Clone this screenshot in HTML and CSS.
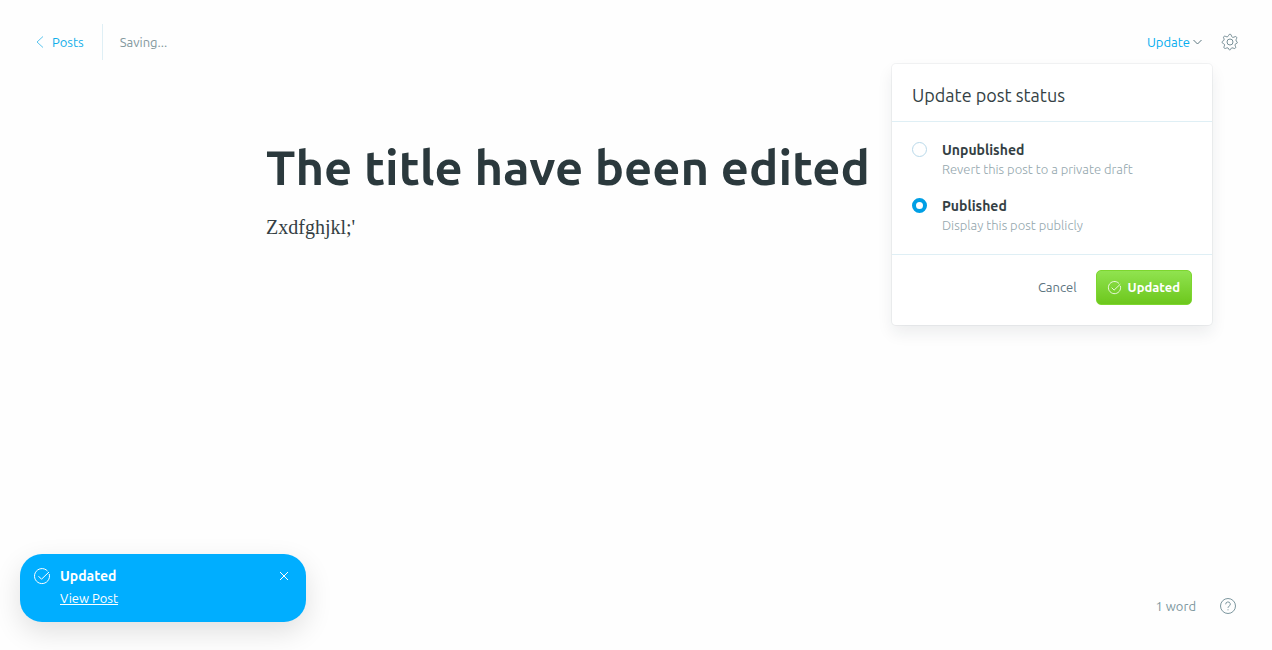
FILE: index.html
```html
<!DOCTYPE html>
<html lang="en">
<head>
<meta charset="utf-8">
<meta name="viewport" content="width=device-width, initial-scale=1">
<title>Post editor</title>
<link rel="stylesheet" href="styles.css">
</head>
<body>
<div class="editor">
  <header class="toolbar">
    <a class="back" href="#">
      <svg class="icon-back" viewBox="0 0 8 12" aria-hidden="true"><path d="M7 .5 1 6l6 5.500"/></svg>
      Posts
    </a>
    <span class="save-state">Saving...</span>
    <div class="actions">
      <div class="publish">
        <button class="update" type="button" aria-expanded="true">Update
          <svg class="icon-chevron" viewBox="0 0 9 8" aria-hidden="true"><path d="m.5 2 4 4 4-4"/></svg>
        </button>
        <form class="menu">
          <h2 class="menu-title">Update post status</h2>
          <div class="options">
            <label class="option">
              <input class="radio" type="radio" name="status">
              <span><strong class="option-name">Unpublished</strong><small class="option-note">Revert this post to a private draft</small></span>
            </label>
            <label class="option">
              <input class="radio" type="radio" name="status" checked>
              <span><strong class="option-name">Published</strong><small class="option-note">Display this post publicly</small></span>
            </label>
          </div>
          <div class="menu-footer">
            <button class="cancel" type="button">Cancel</button>
            <button class="confirm" type="button">
              <svg class="icon-small" viewBox="0 0 16 16" aria-hidden="true"><path d="M15.200 6A7.500 7.500 0 1 1 13.500 3M4.500 8.200l3 3L15 4"/></svg>
              Updated
            </button>
          </div>
        </form>
      </div>
      <button class="settings" type="button" aria-label="Settings">
        <svg class="icon-gear" viewBox="0 0 24 24" aria-hidden="true"><circle cx="12" cy="12" r="4.500"/><path d="M10.200 1.600a1.900 1.900 0 0 1 3.600 0l.6 1.800a2.500 2.500 0 0 0 3.400 1.400l1.700-.8a1.900 1.900 0 0 1 2.500 2.500l-.8 1.700a2.500 2.500 0 0 0 1.400 3.400a1.900 1.900 0 0 1 0 2.200l-1.400.6a2.500 2.500 0 0 0-1.400 3.400l.6 1.300a1.900 1.900 0 0 1-2.500 2.500l-1.300-.6a2.500 2.500 0 0 0-3.400 1.400l-.4.9a1.200 1.200 0 0 1-2.200 0l-.4-.9a2.500 2.500 0 0 0-3.400-1.400l-1.300.6a1.900 1.900 0 0 1-2.500-2.500l.6-1.300a2.500 2.500 0 0 0-1.400-3.400l-1-.4a1.900 1.900 0 0 1 0-3.400l1-.4A2.500 2.500 0 0 0 3 7.200l-.6-1.300a1.900 1.900 0 0 1 2.500-2.500l1.300.6a2.500 2.500 0 0 0 3.400-1.400z"/></svg>
      </button>
    </div>
  </header>
  <main class="post">
    <h1 class="post-title">The title have been edited</h1>
    <p class="post-body">Zxdfghjkl;'</p>
  </main>
  <footer class="status-bar">
    <aside class="toast" role="status">
      <svg class="icon-check" viewBox="0 0 16 16" aria-hidden="true"><path d="M15.200 6A7.500 7.500 0 1 1 13.500 3M4.500 8.200l3 3L15 4"/></svg>
      <div class="toast-text">
        <strong class="toast-title">Updated</strong>
        <a class="toast-link" href="#">View Post</a>
      </div>
      <button class="toast-close" type="button" aria-label="Close"><svg class="icon-close" viewBox="0 0 8 8" aria-hidden="true"><path d="m0 0 8 8M8 0 0 8"/></svg></button>
    </aside>
    <div class="info">
      <span>1 word</span>
      <a class="help" href="#" aria-label="Help"><svg class="icon-help" viewBox="0 0 16 16" aria-hidden="true"><circle cx="8" cy="8" r="7.500"/><path d="M5.700 6.300a2.300 2.300 0 1 1 3.300 2c-.7.3-1 .7-1 1.500M8 11.300v1"/></svg></a>
    </div>
  </footer>
</div>
</body>
</html>
```
FILE: styles.css
```css
*, *::before, *::after { box-sizing: border-box; }
body {
  margin: 0;
  background: #fefefe;
  color: #343f44;
  font: 13px/20px Ubuntu, "Noto Sans", "Open Sans", sans-serif;
}
button { padding: 0; border: 0; background: none; color: inherit; font: inherit; cursor: pointer; }
a { color: inherit; }
svg { display: block; flex: none; fill: none; stroke: currentColor; overflow: visible; }

.editor { display: flex; flex-direction: column; min-height: 100vh; }

.toolbar { display: flex; align-items: center; padding: 24px 34px 0 36px; }
.back {
  display: flex; align-items: center; gap: 8px;
  height: 36px; padding-right: 18px; margin-right: 17px;
  border-right: 1px solid #dfeff5;
  color: #12aeea; text-decoration: none;
}
.icon-back { width: 8px; height: 12px; color: #5cc5ee; }
.save-state { color: #84999f; }
.actions { display: flex; align-items: center; gap: 20px; margin-left: auto; }
.publish { position: relative; }
.update { display: flex; align-items: center; gap: 3px; color: #05adef; }
.icon-chevron { width: 9px; height: 8px; color: #5d7881; }
.settings { color: #6d858e; }
.icon-gear { width: 16px; height: 16px; stroke-width: 1.4; }

.menu {
  position: absolute; top: 32px; right: -10px;
  width: 320px;
  border-radius: 4px;
  background: #fff;
  box-shadow: 0 0 0 1px rgba(99, 114, 130, .08), 0 8px 16px rgba(27, 39, 51, .08);
}
.menu-title { margin: 0; padding: 19px 20px 14px; border-bottom: 1px solid #dfeff5; font-size: 18px; line-height: 24px; font-weight: 400; }
.options { display: grid; gap: 16px; padding: 18px 20px; border-bottom: 1px solid #dfeff5; }
.option { display: flex; gap: 15px; cursor: pointer; }
.radio { appearance: none; flex: none; width: 15px; height: 15px; margin: 2px 0 0; border: 1px solid #b9d9ea; border-radius: 50%; background: #fff; }
.radio:checked { border: 4px solid #009fe5; }
.option-name { display: block; font-size: 14px; font-weight: 600; }
.option-note { display: block; padding-bottom: 2px; color: #93a6ad; font-size: 13px; line-height: 18px; font-weight: 300; }
.menu-footer { display: flex; justify-content: flex-end; align-items: flex-start; gap: 19px; padding: 15px 20px 20px; line-height: 34px; }
.cancel { color: #5c7480; }
.confirm {
  display: flex; align-items: center; gap: 7px;
  height: 35px; padding: 0 11px 1px;
  border: 1px solid #7dd62f; border-radius: 5px;
  background: linear-gradient(#90e34f, #6dc71d);
  color: #fff; font-weight: 600;
}
.icon-small { width: 13px; height: 13px; }

.post { width: 100%; max-width: 780px; margin: 0 auto; padding: 79px 20px 24px; flex: 1; }
.post-title { margin: 0 0 16px; color: #2b393d; font-size: 49px; line-height: 56px; font-weight: 700; }
.post-body { margin: 0; font: 20px/32px "Liberation Serif", serif; }

.status-bar { display: flex; justify-content: space-between; align-items: flex-end; padding: 0 36px 28px 20px; }
.toast {
  display: flex; align-items: flex-start; gap: 10px;
  width: 286px; min-height: 68px; padding: 12px 18px 12px 14px;
  border-radius: 22px;
  background: #00aeff; color: #fff;
  box-shadow: 0 10px 28px rgba(0, 0, 0, .12);
}
.icon-check { width: 16px; height: 16px; margin-top: 2px; }
.toast-text { flex: 1; }
.toast-title { display: block; margin-bottom: 2px; font-size: 14px; }
.toast-link { display: block; width: max-content; }
.toast-close { padding-top: 6px; }
.icon-close { width: 8px; height: 8px; }
.info { display: flex; align-items: center; gap: 24px; padding-bottom: 6px; color: #7d979f; }
.icon-help { width: 16px; height: 16px; }
```
